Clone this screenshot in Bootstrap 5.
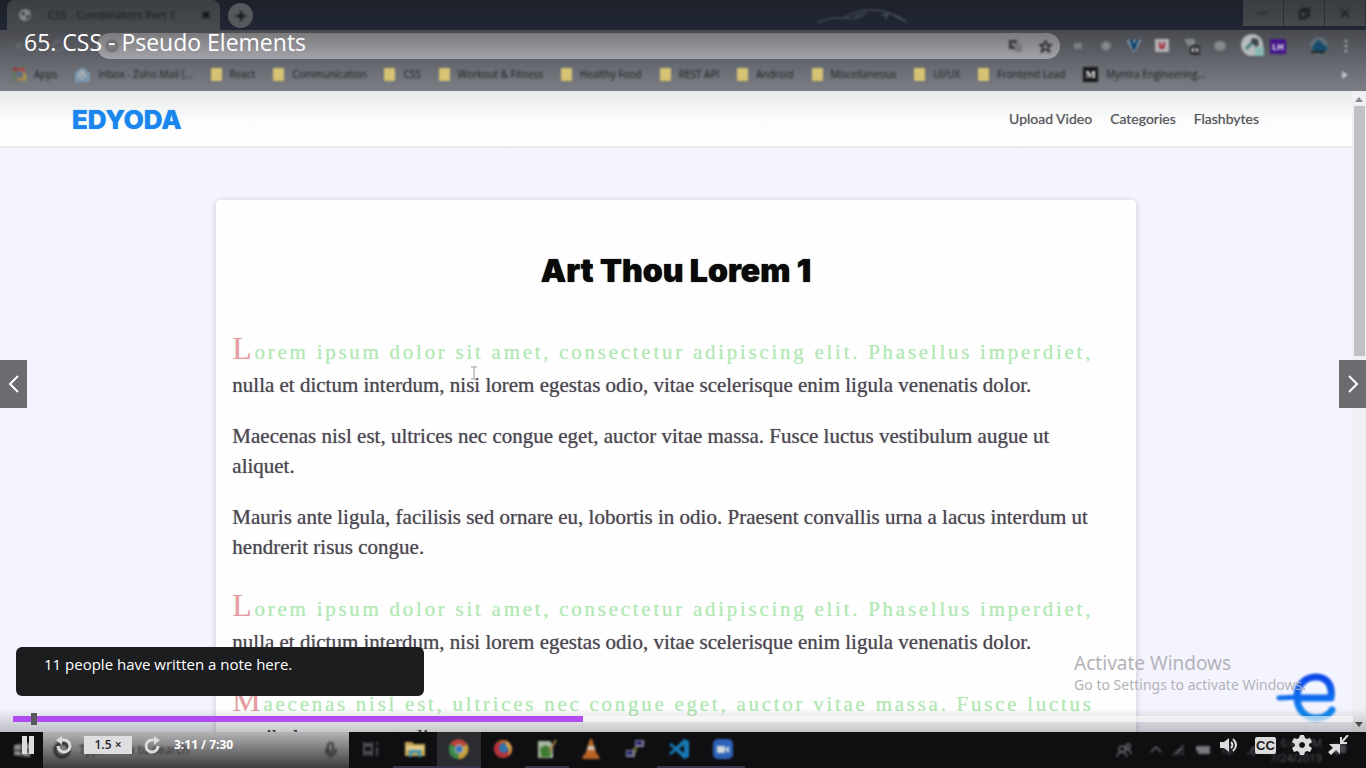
<!DOCTYPE html>
<html lang="en">
<head>
<meta charset="utf-8">
<meta name="viewport" content="width=device-width, initial-scale=1">
<title>65. CSS - Pseudo Elements</title>
<link href="https://cdn.jsdelivr.net/npm/bootstrap@5.3.0/dist/css/bootstrap.min.css" rel="stylesheet">
<style>
  body { font-family: "Open Sans", "Noto Sans", sans-serif; background: #000; }
  svg { display: block; flex: none; }

  /* recorded browser window */
  .tab-strip { height: 30px; background: linear-gradient(#1c2029, #212835); }
  .browser-tab { width: 213px; margin-left: 7px; background: linear-gradient(#3b3e42, #484b50); border-radius: 8px 8px 0 0; color: #17191c; font-size: 11px; line-height: 30px; padding: 0 10px 0 12px; }
  .plain-btn { border: 0; background: none; padding: 0; color: inherit; }
  .new-tab { width: 25px; height: 25px; border-radius: 50%; background: #55585c; color: #121315; margin: 3px 0 0 8px; }
  .car { margin-top: 7px; color: #59606b; }
  .window-btns { margin-left: 334px; }
  .window-btn { width: 41px; height: 26px; background: linear-gradient(#393c41, #45484d); color: #1a1c20; border-right: 1px solid #2b2e34; }
  .toolbar { height: 32px; background: linear-gradient(#484a50, #63666c); padding: 0 15px; color: #7b7e84; }
  .address-bar { height: 26px; border-radius: 13px; background: linear-gradient(#7b7b7d, #a2a3a9); color: #3a3b3f; margin-left: 31px; padding: 0 8px; }
  .address-bar input { background: none; border: 0; outline: 0; min-width: 0; }
  .extensions { margin-left: 12px; gap: 14px; }
  .lighthouse { margin-left: 5px; }
  .profile { margin-left: 23px; }
  .menu-dots { margin-left: 12px; }
  .bookmarks { height: 29px; background: linear-gradient(#64676d, #7b7e85); font-size: 10px; padding: 0 17px 4px 13px; gap: 18px; }
  .bookmarks a { color: #1b1c20; text-decoration: none; white-space: nowrap; display: flex; align-items: center; gap: 8px; }
  .folder-mark { width: 11px; height: 13px; background: #d6c373; border-radius: 1px; }
  .medium-mark { width: 15px; height: 15px; background: #151618; color: #fff; font: 700 11px/15px "Liberation Serif", serif; text-align: center; }

  /* web page inside the browser */
  .site { background: #f4f4fe; min-height: 0; }
  .site-head { height: 55px; background: linear-gradient(#e8ebea, #fdfdfd 60%, #fff); box-shadow: 0 1px 2px #dddbe4; padding: 0 93px 0 72px; }
  .site-brand { font: 800 26px/32px Inter, sans-serif; color: #1a86ee; text-decoration: none; text-shadow: 0 0 1px #1a86ee; padding-top: 2px; }
  .site-head nav { font: 400 14px/20px Lato, sans-serif; gap: 18px; }
  .site-head nav a { color: #55555a; text-decoration: none; text-shadow: 0 0 1px #a5a5aa; }
  .article { width: 68%; margin-top: 54px; padding: 51px 16px 0; background: #fefefe; border-radius: 4px; box-shadow: 0 1px 6px #c9c7d6; }
  .article h1 { font: 900 32px/40px Inter, sans-serif; color: #0a0a0a; margin-bottom: 35px; text-shadow: 0 0 1px #0a0a0a; }
  .article p { font: 400 21px/30px "Liberation Serif", serif; color: #4c4751; margin-bottom: 21px; padding-right: 8px; text-shadow: 0 0 1px #8a858f; }
  .article .fancy::first-line { color: #b4e8b6; letter-spacing: .13em; text-shadow: 0 0 1px #c9f0ca; }
  .article .fancy::first-letter { color: #ea9aa4; font-size: 32px; line-height: 44px; }
  .page-scroll { width: 14px; background: #f0eff3; color: #8b8b8f; }
  .scroll-thumb { height: 250px; width: 11px; background: #c1c1c3; }

  /* recorded taskbar */
  .taskbar { height: 36px; background: #0f0f12; }
  .start-tile { width: 43px; color: #8a8a8c; }
  .search-tile { width: 306px; background: linear-gradient(#b4b4b6, #3c3c3e); color: #1f1f21; font-size: 12px; padding: 0 10px 0 10px; }
  .task-tile { width: 44px; height: 36px; border-bottom: 2px solid transparent; }
  .is-open { border-color: #34344a; }
  .is-active { background: #2b2c2f; }
  .tray { color: #5a5a5e; font-size: 11px; line-height: 15px; gap: 10px; padding-right: 18px; }
  .soft svg, .soft a, .soft span, .soft time { filter: blur(1px); }
  .soft a svg, .soft a span { filter: none; }

  /* player overlay */
  .lecture-title { top: 28px; left: 24px; font-size: 23px; line-height: 28px; color: #fff; font-weight: 400; }
  .step-btn { width: 27px; height: 48px; background: #6b6b70; color: #fff; border: 0; padding: 0; top: 360px; }
  .text-cursor { left: 470px; top: 366px; color: #999; }
  .note { left: 16px; bottom: 72px; width: 408px; height: 49px; border-radius: 6px; background: #1c1d1f; color: #fff; font-size: 15px; line-height: 20px; padding: 7px 28px; }
  .watermark { right: 60px; bottom: 73px; color: #b3b3b7; font: 400 14px/20px "Noto Sans", sans-serif; }
  .watermark strong { font-weight: 400; font-size: 19px; line-height: 24px; display: block; }
  .floating-logo { right: 28px; bottom: 44px; filter: blur(1px); }
  .shade { height: 24px; bottom: 36px; background: linear-gradient(rgba(0,0,0,0), rgba(0,0,0,.22)); }
  .seek { left: 13px; right: 13px; bottom: 46px; height: 6px; background: rgba(255,255,255,.6); }
  .seek-fill { height: 6px; background: #b04df0; }
  .seek-note { width: 6px; height: 12px; background: #58595c; left: 18px; top: -3px; }
  .controls { height: 46px; padding: 0 17px 0 16px; color: #dcdcde; gap: 12px; }
  .rate { width: 48px; height: 18px; background: #dfdfe1; color: #26272a; border: 0; padding: 0; font-size: 12px; font-weight: 600; line-height: 18px; }
  .clock { font-size: 12px; font-weight: 700; color: #fff; }
  .controls-end { gap: 16px; }
  .cc-mark { width: 21px; height: 17px; border-radius: 2px; background: #dcdcde; color: #1c1c1e; font: 700 13px/17px "Liberation Sans", sans-serif; text-align: center; }
</style>
</head>
<body>
<main class="position-relative vh-100 overflow-hidden d-flex flex-column">

  <header class="soft">
    <div class="tab-strip d-flex">
      <div class="browser-tab d-flex align-items-center">
        <svg width="13" height="13" viewBox="0 0 13 13"><circle cx="6" cy="6" r="6" fill="#85878b"/><path d="M2 4l3-2 1 3-2 2zM7 7l4-2-1 4-3 1z" fill="#393c40"/></svg>
        <span class="ms-3 flex-grow-1">CSS - Combinators Part 1</span>
        <button class="plain-btn" aria-label="Close tab"><svg width="8" height="8" viewBox="0 0 8 8"><path d="M1 1l6 6M7 1L1 7" stroke="#0b0c0d" stroke-width="2"/></svg></button>
      </div>
      <button class="plain-btn new-tab d-flex align-items-center justify-content-center" aria-label="New tab"><svg width="12" height="12" viewBox="0 0 12 12"><path d="M6 1v10M1 6h10" stroke="currentColor" stroke-width="2"/></svg></button>
      <svg class="ms-auto car" width="92" height="18" viewBox="0 0 92 18" fill="none" stroke="currentColor"><path d="M1 16Q10 10 27 11Q40 2 58 3Q74 4 90 15M28 11q12 1 18-2M69 5v8M64 8h9M76 8l12 6M38 9l12-3"/></svg>
      <div class="d-flex window-btns">
        <button class="plain-btn window-btn" aria-label="Minimize"><svg class="mx-auto" width="10" height="10"><path d="M0 5h9" stroke="currentColor"/></svg></button>
        <button class="plain-btn window-btn" aria-label="Restore"><svg class="mx-auto" width="11" height="11" fill="none" stroke="currentColor" stroke-width="2"><path d="M1 3h6v7H1zM3 3V1h7v7H8"/></svg></button>
        <button class="plain-btn window-btn" aria-label="Close"><svg class="mx-auto" width="10" height="10"><path d="M1 1l8 8M9 1L1 9" stroke="currentColor" stroke-width="1.5"/></svg></button>
      </div>
    </div>

    <div class="toolbar d-flex align-items-center">
      <svg width="51" height="14" viewBox="0 0 51 14" fill="none" stroke="currentColor"><path d="M9 7H1l4-4M1 7l4 4M46 3a5 5 0 1 0 2 5"/></svg>
      <div class="address-bar d-flex align-items-center flex-grow-1">
        <svg width="14" height="14" viewBox="0 0 14 14" fill="none" stroke="#4a4b4f" stroke-width="1.5"><circle cx="7" cy="7" r="5"/><path d="M7 6v4M7 4v1"/></svg>
        <input class="flex-grow-1" type="text" aria-label="Address">
        <svg width="14" height="14" viewBox="0 0 14 14"><path d="M0 1h8v9H0z" fill="#333438"/><path d="M5 4h8v9H6z" fill="#77787c"/><path d="M2 5h4M3 3l2 5" stroke="#999"/></svg>
        <svg class="ms-3" width="13" height="13" viewBox="0 0 16 16" fill="none" stroke="#2a2b2f" stroke-width="2"><path d="M8 1l2 5h5l-4 3 2 6-5-4-5 4 2-6-4-3h5z"/></svg>
      </div>
      <div class="d-flex align-items-center extensions">
        <svg width="13" height="14"><rect x="2" y="4" width="8" height="6" fill="#7b7e83"/></svg>
        <svg width="14" height="14"><circle cx="7" cy="7" r="4" fill="#85888d"/><path d="M7 1v12M1 7h12M3 3l8 8M11 3l-8 8" stroke="#85888d"/></svg>
        <svg width="14" height="14"><path d="M0 1h14L7 14z" fill="#a0b8ca"/><path d="M2 1h4l1 4 2-4h3L7 13z" fill="#0c3c68"/></svg>
        <svg width="14" height="14"><rect width="14" height="13" fill="#b3b3b7"/><path d="M4 3v4q0 3 3 3t3-3V3H8v4H6V3z" fill="#a22a35"/></svg>
        <svg width="17" height="18"><path d="M1 2h11v4L9 10H6z" fill="#85888d"/><rect x="7" y="8" width="10" height="10" rx="2" fill="#2d2f33"/><path d="M10 11v4M14 11v4" stroke="#ddd" stroke-width="2"/></svg>
        <svg width="13" height="14"><ellipse cx="6" cy="7" rx="6" ry="5" fill="#85888d"/></svg>
        <svg width="24" height="24"><circle cx="11" cy="11" r="11" fill="#b8bbbd"/><path d="M5 15L13 7" stroke="#477c7c" stroke-width="3"/><path d="M11 4l6 1 1 6-3 2-5-5z" fill="#3d4348"/><path d="M14 13h9v9h-9z" fill="#87b9b4"/></svg>
      </div>
      <svg class="lighthouse" width="16" height="15"><rect width="16" height="15" fill="#43148a"/><text x="2" y="11" font-size="9" font-weight="700" fill="#eee">LH</text></svg>
      <svg class="profile" width="20" height="20"><circle cx="10" cy="10" r="9" fill="#627076"/><path d="M2 13L9 3l5 5 5 4-6 6z" fill="#164b6c"/><path d="M2 16h14" stroke="#222" stroke-width="2"/></svg>
      <svg class="menu-dots" width="10" height="14" fill="#a5a8ae"><circle cx="5" cy="2" r="1.5"/><circle cx="5" cy="7" r="1.5"/><circle cx="5" cy="12" r="1.5"/></svg>
    </div>

    <nav class="bookmarks d-flex align-items-center" aria-label="Bookmarks">
      <a href="#"><svg width="13" height="13"><path d="M0 0h5v3H0z" fill="#993a38"/><path d="M6 0h6v3H6z" fill="#b4473c"/><path d="M0 5h3v3H0z" fill="#55824f"/><path d="M5 5h3v3H5z" fill="#4a7099"/><path d="M10 5h3v8h-3z" fill="#b49243"/><path d="M0 10h3v3H0z" fill="#4c7c4d"/><path d="M5 10h4v3H5z" fill="#ad8a45"/></svg>Apps</a>
      <a href="#"><svg width="15" height="15" viewBox="0 0 15 15"><path d="M0 6l7-6 8 6v9H0z" fill="#7e99b4"/><circle cx="7" cy="8" r="4" fill="#b4b6b8"/><path d="M3 5l9 8M12 5l-9 8" stroke="#7287a0"/></svg>Inbox - Zoho Mail (...</a>
      <a href="#"><span class="folder-mark"></span>React</a>
      <a href="#"><span class="folder-mark"></span>Communication</a>
      <a href="#"><span class="folder-mark"></span>CSS</a>
      <a href="#"><span class="folder-mark"></span>Workout &amp; Fitness</a>
      <a href="#"><span class="folder-mark"></span>Healthy Food</a>
      <a href="#"><span class="folder-mark"></span>REST API</a>
      <a href="#"><span class="folder-mark"></span>Android</a>
      <a href="#"><span class="folder-mark"></span>Miscellaneous</a>
      <a href="#"><span class="folder-mark"></span>UI/UX</a>
      <a href="#"><span class="folder-mark"></span>Frontend Lead</a>
      <a href="#"><span class="medium-mark">M</span>Myntra Engineering...</a>
      <svg class="ms-auto" width="8" height="8"><path d="M1 0l6 4-6 4z" fill="#c4c6ca"/></svg>
    </nav>
  </header>

  <div class="site d-flex flex-grow-1 overflow-hidden">
    <div class="flex-grow-1 overflow-hidden">
      <div class="site-head d-flex align-items-center justify-content-between">
        <a class="site-brand" href="#">EDYODA</a>
        <nav class="d-flex" aria-label="Site">
          <a href="#">Upload Video</a><a href="#">Categories</a><a href="#">Flashbytes</a>
        </nav>
      </div>
      <article class="article mx-auto">
        <h1 class="text-center">Art Thou Lorem 1</h1>
        <p class="fancy">Lorem ipsum dolor sit amet, consectetur adipiscing elit. Phasellus imperdiet, nulla et dictum interdum, nisi lorem egestas odio, vitae scelerisque enim ligula venenatis dolor.</p>
        <p>Maecenas nisl est, ultrices nec congue eget, auctor vitae massa. Fusce luctus vestibulum augue ut aliquet.</p>
        <p>Mauris ante ligula, facilisis sed ornare eu, lobortis in odio. Praesent convallis urna a lacus interdum ut hendrerit risus congue.</p>
        <p class="fancy">Lorem ipsum dolor sit amet, consectetur adipiscing elit. Phasellus imperdiet, nulla et dictum interdum, nisi lorem egestas odio, vitae scelerisque enim ligula venenatis dolor.</p>
        <p class="fancy">Maecenas nisl est, ultrices nec congue eget, auctor vitae massa. Fusce luctus vestibulum augue ut aliquet.</p>
      </article>
    </div>
    <div class="page-scroll d-flex flex-column flex-shrink-0 align-items-center">
      <svg width="8" height="15"><path d="M0 11l4-5 4 5z" fill="currentColor"/></svg>
      <div class="scroll-thumb"></div>
      <svg class="mt-auto" width="8" height="12"><path d="M0 2l4 5 4-5z" fill="#555"/></svg>
    </div>
  </div>

  <footer class="taskbar d-flex soft">
    <div class="start-tile d-flex align-items-center justify-content-center"><svg width="16" height="14"><path d="M0 2l7-1v6H0zM8 1l8-1v7H8zM0 8h7v5l-7-1zM8 8h8v6l-8-1z" fill="currentColor"/></svg></div>
    <div class="search-tile d-flex align-items-center">
      <svg width="18" height="18" fill="none" stroke="#252527" stroke-width="3"><circle cx="9" cy="9" r="7"/></svg>
      <span class="ms-2">Type here to search</span>
      <svg class="ms-auto" width="16" height="18" fill="none" stroke="#232325" stroke-width="1.5"><rect x="5" y="2" width="5" height="9" rx="2"/><path d="M3 8q0 6 5 6t5-6M8 14v3"/></svg>
    </div>
    <div class="task-tile d-flex align-items-center justify-content-center"><svg width="16" height="14" fill="none" stroke="#626367" stroke-width="1.5"><path d="M1 0v2h8V0M1 4h8v6H1zM1 14v-2h8v2M14 0v3M14 5v9"/></svg></div>
    <div class="task-tile is-open d-flex align-items-center justify-content-center"><svg width="20" height="18"><path d="M0 2h7l2 2h11v12H0z" fill="#c6a75a"/><path d="M1 6h18v4H1z" fill="#e0cb87"/><path d="M4 10h12v7h-3v-4H7v4H4z" fill="#3f93ae"/></svg></div>
    <div class="task-tile is-open is-active d-flex align-items-center justify-content-center"><svg width="20" height="20" viewBox="0 0 20 20"><path d="M10 10L1 5a10 10 0 0 1 17 0z" fill="#bd4238"/><path d="M10 10l8-5a10 10 0 0 1-9 15z" fill="#c7a23e"/><path d="M10 10L9 20A10 10 0 0 1 1 5z" fill="#3b8b4c"/><circle cx="10" cy="10" r="4.5" fill="#c8c8c8"/><circle cx="10" cy="10" r="3.5" fill="#3c75b8"/></svg></div>
    <div class="task-tile d-flex align-items-center justify-content-center"><svg width="20" height="20"><circle cx="10" cy="10" r="9" fill="#cf6a35"/><path d="M2 5q8-4 14 3t-4 11Q2 19 1 10z" fill="#b8323b"/><circle cx="11" cy="9" r="5" fill="#2f74b0"/><path d="M13 1q8 6 5 13l-3 3q3-7-2-10z" fill="#d8a53f"/></svg></div>
    <div class="task-tile is-open d-flex align-items-center justify-content-center"><svg width="20" height="20"><path d="M1 2h12l3 4v13H1z" fill="#aab8a2"/><path d="M3 9l6-3 6 5-2 7H4z" fill="#3e7b30"/><path d="M19 1l-7 12" stroke="#a18146" stroke-width="2"/></svg></div>
    <div class="task-tile d-flex align-items-center justify-content-center"><svg width="20" height="20"><path d="M9 0h2l5 16H4z" fill="#bf6828"/><path d="M7 7h6l1 4H6z" fill="#c9c6c0"/><path d="M3 15h14l2 5H1z" fill="#b66026"/></svg></div>
    <div class="task-tile d-flex align-items-center justify-content-center"><svg width="20" height="20"><path d="M10 1h9v7h-9zM1 11h9v7H1z" fill="#86869c"/><path d="M11 2h6v4h-6zM2 12h6v4H2z" fill="#27276f"/><path d="M13 8l-5 2 4 2-5 3" stroke="#a09a42" fill="none"/></svg></div>
    <div class="task-tile is-open d-flex align-items-center justify-content-center"><svg width="22" height="20"><path d="M16 0l5 2v16l-5 2-8-8-5 4-2-2 5-4-5-4 2-2 5 4zM16 6l-5 4 5 4z" fill="#1979b4" fill-rule="evenodd"/></svg></div>
    <div class="task-tile is-open d-flex align-items-center justify-content-center"><svg width="20" height="20"><rect width="20" height="20" rx="5" fill="#2e62b8"/><path d="M4 7h8v7H4zM13 9l3-2v7l-3-2z" fill="#d3d8df"/></svg></div>
    <div class="tray d-flex align-items-center ms-auto">
      <svg width="16" height="14" fill="none" stroke="#6a6b6f" stroke-width="1.5"><circle cx="6" cy="6" r="3"/><circle cx="12" cy="3" r="2"/><path d="M1 14q1-5 5-5t5 5M10 7q4-2 5 4"/></svg>
      <svg class="ms-2" width="12" height="10" fill="none" stroke="#6a6b6f" stroke-width="1.5"><path d="M1 7l5-5 5 5"/></svg>
      <svg width="14" height="12" fill="none" stroke="#56575b" stroke-width="1.5"><path d="M1 11L12 1M5 11q2-5 7-6M9 11l3-2"/></svg>
      <svg width="16" height="10"><path d="M0 1h14v8H2V6H0z" fill="#77787c"/></svg>
      <svg width="14" height="12" fill="none" stroke="#56575b"><path d="M1 4h3l4-3v10L4 8H1zM10 3q3 3 0 6"/></svg>
      <svg width="14" height="14" fill="none" stroke="#66676b"><path d="M1 12L10 4M5 6l7-4 1 5-6 5z"/></svg>
      <time class="text-end">6:47 PM<br>7/24/2019</time>
      <svg width="16" height="16"><path d="M1 2h13v9H8l-3 3v-3H1z" fill="#47484b"/></svg>
    </div>
  </footer>

  <svg class="position-absolute text-cursor" width="8" height="14" fill="none" stroke="currentColor"><path d="M1 1h6M4 1v12M1 13h6"/></svg>
  <svg class="position-absolute floating-logo" width="62" height="54" viewBox="0 0 62 54"><defs><linearGradient id="blue" gradientUnits="userSpaceOnUse" x1="0" y1="4" x2="0" y2="50"><stop offset="0" stop-color="#0a43e6"/><stop offset="1" stop-color="#1393f5"/></linearGradient></defs><g fill="none" stroke="url(#blue)" stroke-linecap="round"><path d="M3 28L24 27" stroke-width="5"/><path d="M24 28H55C57 14 50 7 40 7C29 7 21 15 21 27C21 39 29 48 40 48C48 48 53 45 56 40" stroke-width="7" stroke-linejoin="round"/></g></svg>
  <p class="position-absolute watermark mb-0"><strong>Activate Windows</strong>Go to Settings to activate Windows.</p>
  <div class="position-absolute start-0 end-0 shade"></div>

  <h2 class="position-absolute lecture-title mb-0">65. CSS - Pseudo Elements</h2>
  <button class="position-absolute start-0 step-btn" aria-label="Previous lecture"><svg class="mx-auto" width="14" height="20" fill="none" stroke="currentColor" stroke-width="2"><path d="M11 2L3 10l8 8"/></svg></button>
  <button class="position-absolute end-0 step-btn" aria-label="Next lecture"><svg class="mx-auto" width="14" height="20" fill="none" stroke="currentColor" stroke-width="2"><path d="M3 2l8 8-8 8"/></svg></button>
  <div class="position-absolute note">11 people have written a note here.</div>
  <div class="position-absolute seek" role="progressbar" aria-label="Playback" aria-valuenow="191" aria-valuemin="0" aria-valuemax="450">
    <div class="seek-fill" style="width:42.5%"></div>
    <div class="position-absolute seek-note"></div>
  </div>
  <div class="position-absolute start-0 end-0 bottom-0 controls d-flex align-items-center">
    <button class="plain-btn me-2" aria-label="Pause"><svg width="18" height="18"><path d="M6 0h5v18H6zM13 0h5v18h-5z" fill="currentColor"/></svg></button>
    <button class="plain-btn" aria-label="Rewind 5 seconds"><svg width="18" height="18" viewBox="0 0 18 18"><path d="M4 10a6 6 0 1 0 6-6H7" fill="none" stroke="currentColor" stroke-width="3"/><path d="M8 0v9L2 4z" fill="currentColor"/></svg></button>
    <button class="rate">1.5 ×</button>
    <button class="plain-btn" aria-label="Forward 5 seconds"><svg width="18" height="18" viewBox="0 0 18 18"><path d="M14 10a6 6 0 1 1-6-6h3" fill="none" stroke="currentColor" stroke-width="3"/><path d="M10 0v9l6-5z" fill="currentColor"/></svg></button>
    <span class="clock">3:11 / 7:30</span>
    <div class="ms-auto d-flex align-items-center controls-end">
      <button class="plain-btn" aria-label="Volume"><svg width="20" height="16" viewBox="0 0 20 16"><path d="M1 5h4l5-4v14l-5-4H1z" fill="currentColor"/><path d="M12 5q3 3 0 6M14 2q6 6 0 12" fill="none" stroke="currentColor" stroke-width="2"/></svg></button>
      <button class="plain-btn cc-mark" aria-label="Captions">CC</button>
      <button class="plain-btn" aria-label="Settings"><svg width="20" height="20" viewBox="0 0 20 20"><path d="M8 0h4l1 3 2 1 3-1 2 4-3 2v2l3 2-2 4-3-1-2 1-1 3H8l-1-3-2-1-3 1-2-4 3-2V9L0 7l2-4 3 1 2-1zM10 7a3 3 0 1 0 .1 0z" fill="currentColor" fill-rule="evenodd"/></svg></button>
      <button class="plain-btn" aria-label="Exit fullscreen"><svg width="21" height="20" viewBox="0 0 21 20"><path d="M13 2v6h6M20 0l-7 8" fill="none" stroke="currentColor" stroke-width="2"/><path d="M1 9h11v10l-4-4-5 5-3-3 5-4z" fill="currentColor"/></svg></button>
    </div>
  </div>
</main>
<script src="https://cdn.jsdelivr.net/npm/bootstrap@5.3.0/dist/js/bootstrap.bundle.min.js"></script>
</body>
</html>
